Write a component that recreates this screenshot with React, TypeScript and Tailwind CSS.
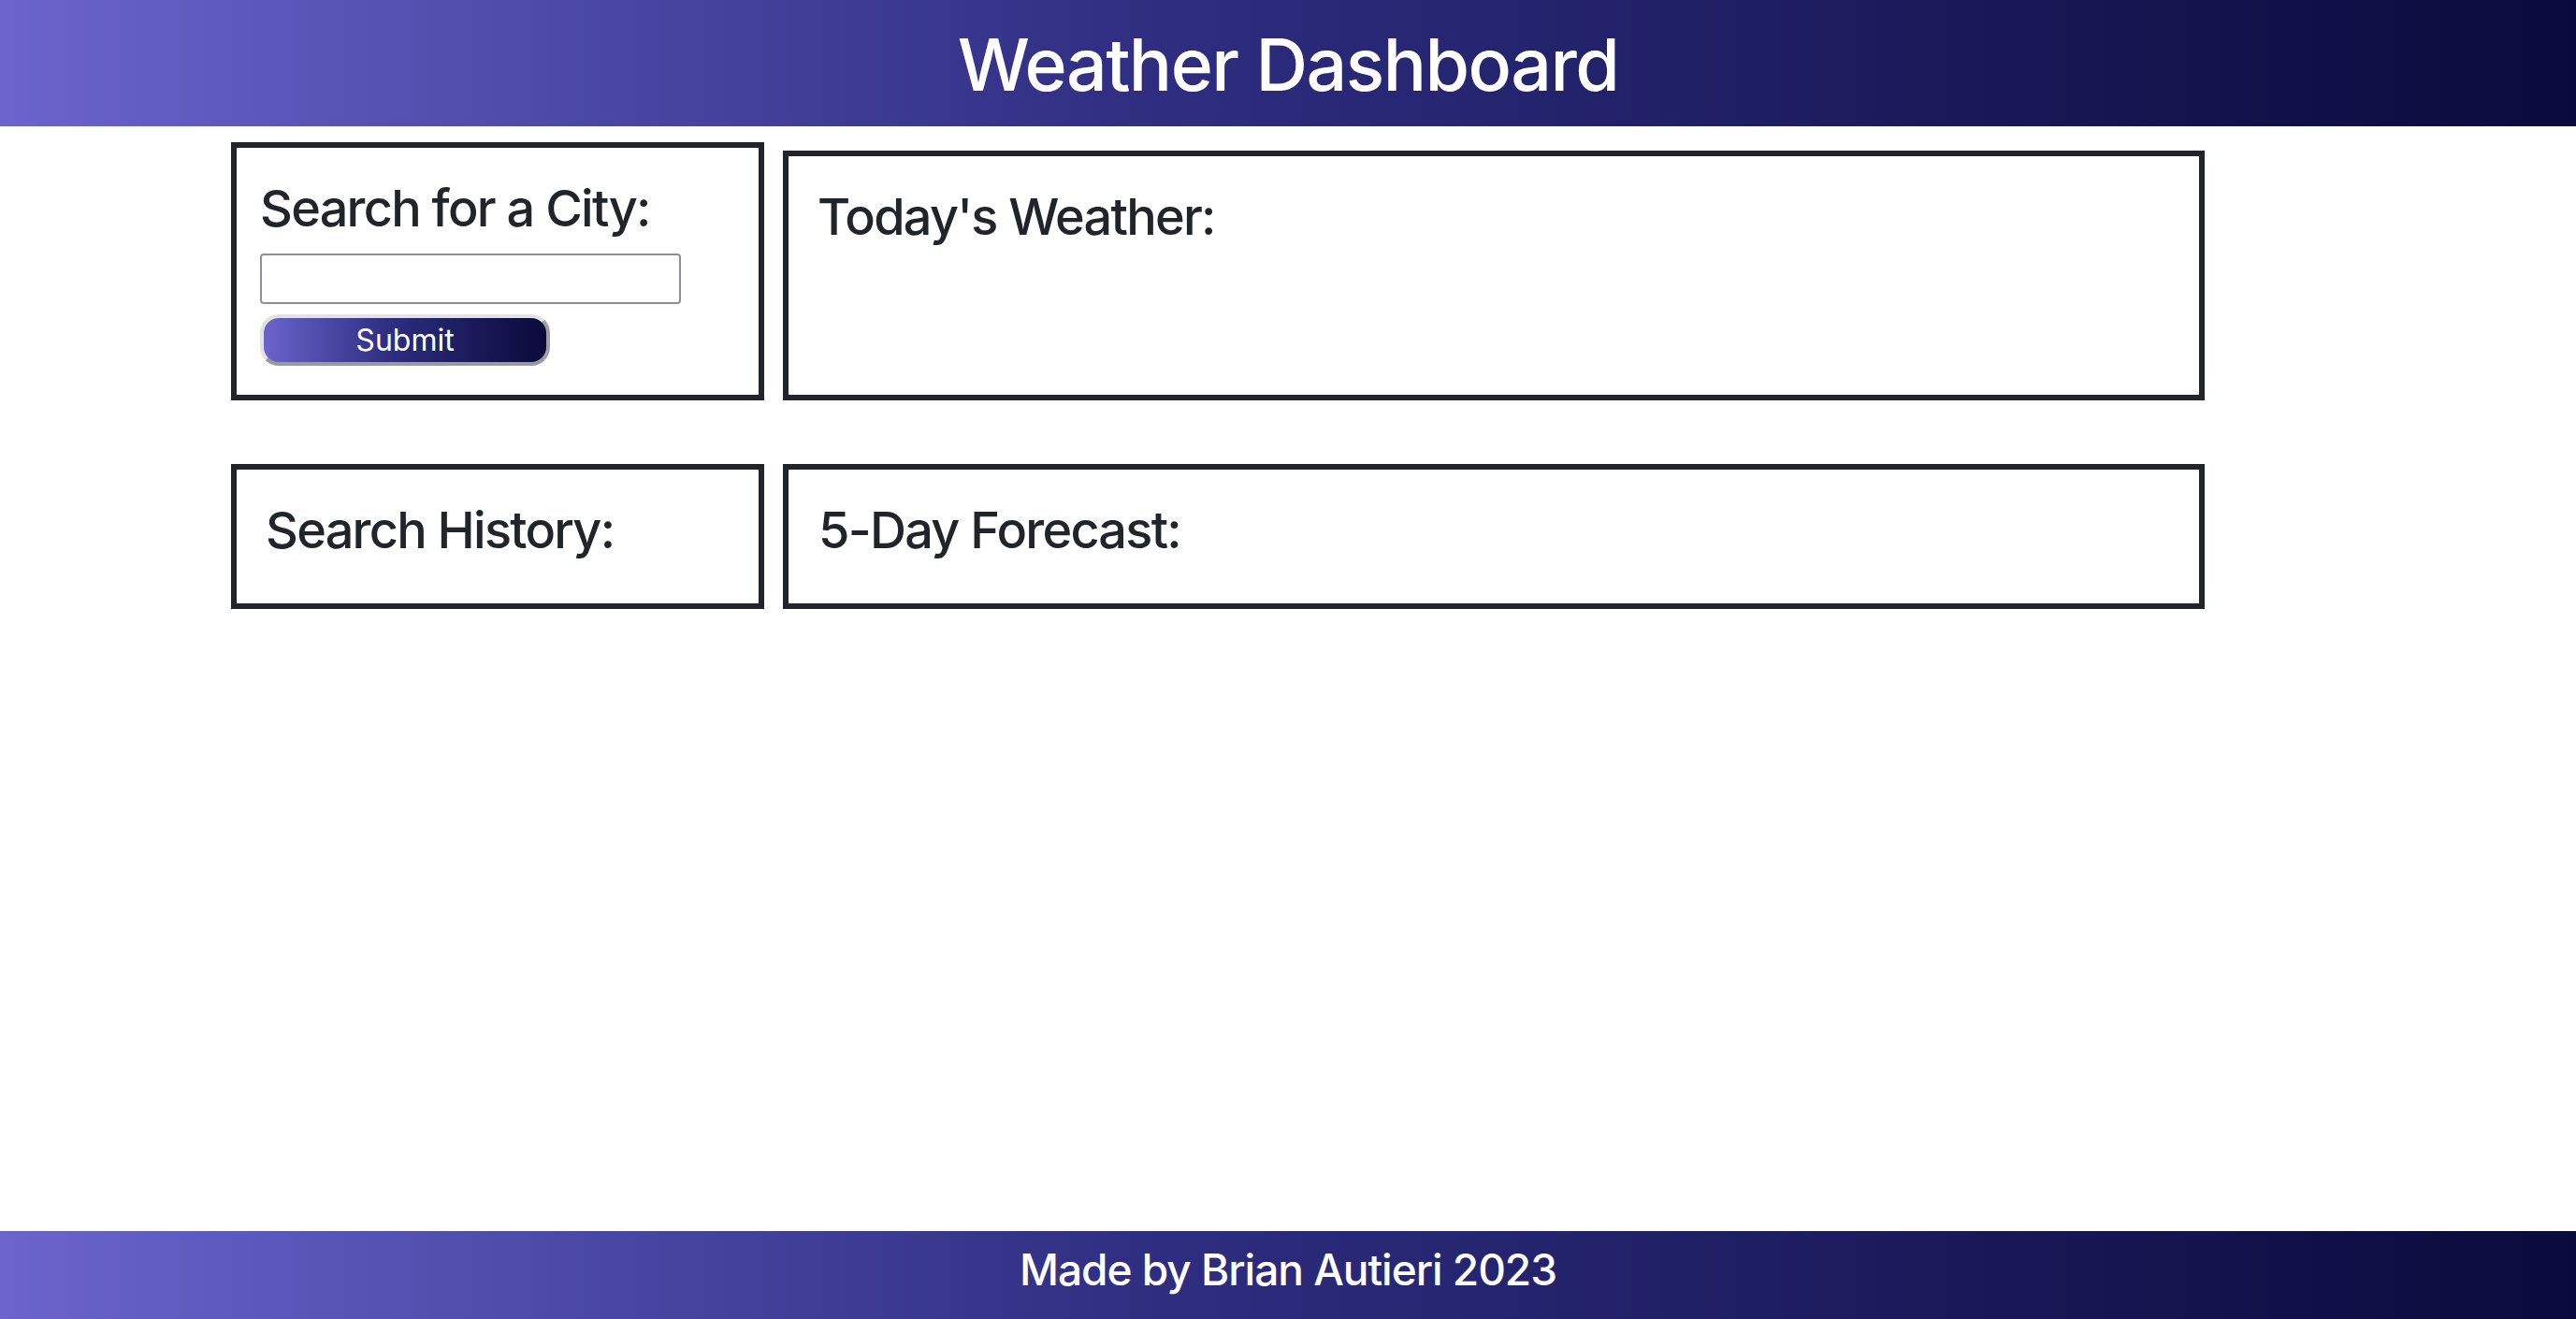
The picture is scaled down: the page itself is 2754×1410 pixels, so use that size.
import React, { useState } from "react";

const font = { fontFamily: "Inter, 'Noto Sans', sans-serif" };

function Panel({ className, children }: { className: string; children?: React.ReactNode }) {
  return <section className={`border-[6px] border-[#212529] bg-white ${className}`}>{children}</section>;
}

function Title({ children }: { children: React.ReactNode }) {
  return <h3 className="text-[54px] font-medium leading-[1.22] tracking-[-0.032em]">{children}</h3>;
}

export default function App() {
  const [city, setCity] = useState("");

  return (
    <div style={font} className="flex min-h-screen flex-col bg-white text-[#212529]">
      <header className="flex h-[135px] items-center justify-center bg-gradient-to-r from-[#6a64cc] via-[#2e2d80] via-45% to-[#0a0a3c]">
        <h1 className="pt-[4px] text-[77px] font-medium leading-none tracking-[-0.02em] text-white">Weather Dashboard</h1>
      </header>

      <main className="flex flex-col gap-[68px] pl-[247px]">
        <div className="flex items-end gap-[20px]">
          <Panel className="mt-[17px] w-[570px] px-[25px] pt-[32px] pb-[31px]">
            <Title>Search for a City:</Title>
            <form className="mt-[15px] flex flex-col items-start gap-[11px]" onSubmit={(e) => e.preventDefault()}>
              <input
                value={city}
                onChange={(e) => setCity(e.target.value)}
                className="h-[54px] w-[450px] rounded-[4px] border-2 border-[#8f8d9b] px-2 text-[28px] outline-none"
              />
              <button
                type="submit"
                className="h-[55px] w-[310px] rounded-[20px] border-[4px] border-t-[#e2e2e2] border-l-[#e2e2e2] border-r-[#a0a0a0] border-b-[#9a9a9a] bg-gradient-to-r from-[#6a64cc] via-[#2e2d80] via-45% to-[#0a0a3c] pt-[2px] text-[32px] leading-none text-white"
              >
                Submit
              </button>
            </form>
          </Panel>
          <Panel className="h-[267px] w-[1520px] px-[31px] pt-[32px]">
            <Title>Today's Weather:</Title>
          </Panel>
        </div>

        <div className="flex gap-[20px]">
          <Panel className="h-[155px] w-[570px] px-[31px] pt-[32px]">
            <Title>Search History:</Title>
          </Panel>
          <Panel className="h-[155px] w-[1520px] px-[32px] pt-[32px]">
            <Title>5-Day Forecast:</Title>
          </Panel>
        </div>
      </main>

      <footer className="mt-auto flex h-[94px] items-start justify-center bg-gradient-to-r from-[#6a64cc] via-[#2e2d80] via-45% to-[#0a0a3c] pt-[14px]">
        <h4 className="text-[46px] font-medium leading-[1.2] tracking-[-0.022em] text-white">Made by Brian Autieri 2023</h4>
      </footer>
    </div>
  );
}
